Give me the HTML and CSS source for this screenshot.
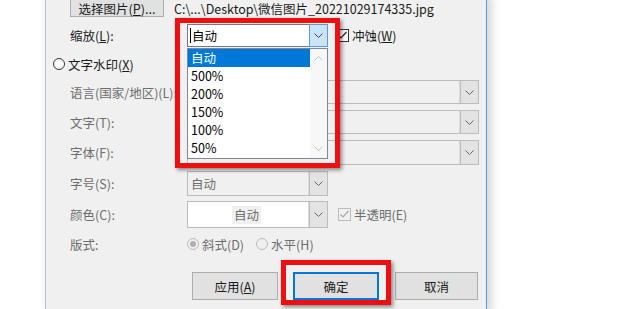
FILE: index.html
```html
<!DOCTYPE html>
<html lang="zh-CN">

<head>
    <meta charset="UTF-8">
    <meta name="viewport" content="width=device-width, initial-scale=1.0">
    <title>水印</title>
    <link rel="stylesheet" href="styles.css">
</head>

<body>
    <div class="screen">
        <div class="dialog">
            <!-- Picture source -->
            <div class="row row-top">
                <button class="btn btn-pick">选择图片(<u>P</u>)...</button>
                <span class="path">C:\...\Desktop\微信图片_20221029174335.jpg</span>
            </div>

            <!-- Scale -->
            <div class="row row-scale">
                <span class="label">缩放(<u>L</u>):</span>
                <div class="combo combo-active">
                    <span class="combo-text"><i class="caret"></i>自动</span>
                    <span class="combo-btn">
                        <svg width="9" height="5" viewBox="0 0 9 5"><path d="M0.5 0.5 L4.5 4.5 L8.5 0.5" fill="none" stroke="#444" stroke-width="1"/></svg>
                    </span>
                    <div class="droplist">
                        <ul class="options">
                            <li class="selected">自动</li>
                            <li>500%</li>
                            <li>200%</li>
                            <li>150%</li>
                            <li>100%</li>
                            <li>50%</li>
                        </ul>
                        <div class="scrollbar">
                            <svg width="9" height="5" viewBox="0 0 9 5"><path d="M0.5 4.5 L4.5 0.5 L8.5 4.5" fill="none" stroke="#c2c2c2" stroke-width="1"/></svg>
                            <svg width="9" height="5" viewBox="0 0 9 5"><path d="M0.5 0.5 L4.5 4.5 L8.5 0.5" fill="none" stroke="#c2c2c2" stroke-width="1"/></svg>
                        </div>
                    </div>
                </div>
                <span class="check">
                    <span class="box">
                        <svg width="11" height="11" viewBox="0 0 11 11"><path d="M1.5 5.5 L4 8 L9.5 2" fill="none" stroke="#222" stroke-width="1.2"/></svg>
                    </span>
                    冲蚀(<u>W</u>)
                </span>
            </div>

            <!-- Text watermark -->
            <div class="row row-radio">
                <span class="radio"></span>
                <span>文字水印(<u>X</u>)</span>
            </div>

            <div class="row row-lang">
                <span class="label off">语言(国家/地区)(L):</span>
                <div class="combo combo-off combo-wide">
                    <span class="combo-text"></span>
                    <span class="combo-btn"><svg width="9" height="5" viewBox="0 0 9 5"><path d="M0.5 0.5 L4.5 4.5 L8.5 0.5" fill="none" stroke="#666" stroke-width="1"/></svg></span>
                </div>
            </div>

            <div class="row row-text">
                <span class="label off">文字(T):</span>
                <div class="combo combo-off combo-wide">
                    <span class="combo-text"></span>
                    <span class="combo-btn"><svg width="9" height="5" viewBox="0 0 9 5"><path d="M0.5 0.5 L4.5 4.5 L8.5 0.5" fill="none" stroke="#666" stroke-width="1"/></svg></span>
                </div>
            </div>

            <div class="row row-font">
                <span class="label off">字体(F):</span>
                <div class="combo combo-off combo-wide">
                    <span class="combo-text"></span>
                    <span class="combo-btn"><svg width="9" height="5" viewBox="0 0 9 5"><path d="M0.5 0.5 L4.5 4.5 L8.5 0.5" fill="none" stroke="#666" stroke-width="1"/></svg></span>
                </div>
            </div>

            <div class="row row-size">
                <span class="label off">字号(S):</span>
                <div class="combo combo-off">
                    <span class="combo-text">自动</span>
                    <span class="combo-btn"><svg width="9" height="5" viewBox="0 0 9 5"><path d="M0.5 0.5 L4.5 4.5 L8.5 0.5" fill="none" stroke="#666" stroke-width="1"/></svg></span>
                </div>
            </div>

            <div class="row row-color">
                <span class="label off">颜色(C):</span>
                <div class="combo combo-off combo-color">
                    <span class="combo-text"><span class="swatch">自动</span></span>
                    <span class="combo-btn"><svg width="9" height="5" viewBox="0 0 9 5"><path d="M0.5 0.5 L4.5 4.5 L8.5 0.5" fill="none" stroke="#666" stroke-width="1"/></svg></span>
                </div>
                <span class="check check-off">
                    <span class="box">
                        <svg width="11" height="11" viewBox="0 0 11 11"><path d="M1.5 5.5 L4 8 L9.5 2" fill="none" stroke="#a8a8a8" stroke-width="1.2"/></svg>
                    </span>
                    半透明(E)
                </span>
            </div>

            <div class="row row-layout">
                <span class="label off">版式:</span>
                <span class="opt off"><span class="radio radio-off checked"></span>斜式(D)</span>
                <span class="opt opt-second off"><span class="radio radio-off"></span>水平(H)</span>
            </div>

            <!-- Dialog buttons -->
            <div class="row row-buttons">
                <button class="btn btn-apply">应用(<u>A</u>)</button>
                <button class="btn btn-ok">确定</button>
                <button class="btn btn-cancel">取消</button>
            </div>

            <!-- Red annotation frames -->
            <div class="mark mark-scale"></div>
            <div class="mark mark-ok"></div>
        </div>
    </div>
</body>

</html>
```

FILE: styles.css
```css
/* General Reset */
* {
    margin: 0;
    padding: 0;
    box-sizing: border-box;
    font-family: "Noto Sans CJK SC", "Liberation Sans", sans-serif;
}

body {
    background-color: #fff;
    overflow: hidden;
    font-size: 12.5px;
    color: #1a1a1a;
}

u {
    text-decoration: underline;
    text-underline-offset: 1px;
}

.screen {
    display: flex;
    padding-left: 45px;
    height: 309px;
}

/* Dialog window */
.dialog {
    position: relative;
    width: 442px;
    height: 320px;
    margin-top: -6px;
    padding-left: 24px;
    background-color: #f0f0f0;
    border-left: 1px solid #a9c4e4;
    border-right: 1px solid #5a9ad8;
    box-shadow: 4px 0 10px rgba(0, 0, 0, 0.18);
}

.row {
    display: flex;
    align-items: center;
}

.label {
    width: 117px;
    flex-shrink: 0;
}

.off {
    color: #6d6d6d;
}

/* Buttons */
.btn {
    height: 100%;
    font-size: 12.5px;
    color: #1a1a1a;
    background-color: #e1e1e1;
    border: 1px solid #adadad;
}

.row-top {
    height: 23px;
}

.btn-pick {
    width: 94px;
    padding-top: 4px;
}

.path {
    margin-left: 10px;
    margin-top: 5px;
    line-height: 15px;
}

/* Rows */
.row-scale {
    margin-top: 7px;
    height: 23px;
}

.row-radio {
    margin-top: 7px;
    margin-left: -17px;
    height: 20px;
}

.row-lang {
    margin-top: 6px;
    height: 24px;
}

.row-text,
.row-font {
    margin-top: 6px;
    height: 24px;
}

.row-font {
    height: 25px;
}

.row-size {
    margin-top: 6px;
    height: 25px;
}

.row-color {
    margin-top: 5px;
    height: 27px;
}

.row-layout {
    margin-top: 6px;
    height: 20px;
}

.row-buttons {
    margin-top: 18px;
    height: 28px;
    padding-left: 122px;
}

/* Combo boxes */
.combo {
    position: relative;
    display: flex;
    width: 141px;
    height: 100%;
    border: 1px solid #bcbcbc;
    background-color: #f0f0f0;
}

.combo-wide {
    width: 292px;
}

.combo-text {
    flex: 1;
    display: flex;
    align-items: center;
    padding-left: 3px;
    color: #6d6d6d;
}

.combo-btn {
    width: 18px;
    display: flex;
    align-items: center;
    justify-content: center;
    background-color: #e3e3e3;
    border-left: 1px solid #bcbcbc;
}

.combo-off .combo-text {
    border-right: 1px solid #dcdcdc;
}

.combo-active {
    border-color: #7a7a7a;
    background-color: #fff;
}

.combo-active .combo-text {
    color: #000;
    padding-left: 2px;
}

.combo-active .combo-btn {
    background-color: #cce4f7;
    border: 1px solid #569de5;
    margin: -1px -1px -1px 0;
    width: 19px;
}

.caret {
    display: inline-block;
    width: 1px;
    height: 15px;
    background-color: #000;
    margin-right: 1px;
}

.combo-color {
    background-color: #fff;
}

.combo-color .combo-text {
    justify-content: center;
    padding-right: 6px;
}

.swatch {
    background-color: #f0f0f0;
    padding: 0 2px;
    line-height: 18px;
}

/* Open list of the scale combo */
.droplist {
    position: absolute;
    top: 23px;
    left: -1px;
    width: 141px;
    height: 111px;
    display: flex;
    background-color: #fff;
    border: 1px solid #828790;
    z-index: 2;
}

.options {
    flex: 1;
    list-style: none;
}

.options li {
    height: 18px;
    line-height: 18px;
    padding-left: 3px;
    color: #000;
}

.options li.selected {
    background-color: #0078d7;
    color: #fff;
}

.scrollbar {
    width: 17px;
    display: flex;
    flex-direction: column;
    justify-content: space-between;
    align-items: center;
    padding: 7px 0 7px;
    background-color: #f7f7f7;
}

/* Check boxes and radios */
.check {
    display: flex;
    align-items: center;
    margin-left: 8px;
}

.check-off {
    margin-left: 10px;
    color: #6d6d6d;
}

.box {
    width: 13px;
    height: 13px;
    margin-right: 3px;
    border: 1px solid #333;
    background-color: #fff;
    display: flex;
    align-items: center;
    justify-content: center;
}

.check-off .box {
    border-color: #bcbcbc;
    background-color: #f0f0f0;
}

.radio {
    width: 12px;
    height: 12px;
    margin-right: 3px;
    border: 1px solid #333;
    border-radius: 50%;
    background-color: #fff;
}

.radio-off {
    border-color: #bcbcbc;
    background-color: #f0f0f0;
    position: relative;
}

.radio-off.checked::after {
    content: "";
    position: absolute;
    left: 2px;
    top: 2px;
    width: 6px;
    height: 6px;
    border-radius: 50%;
    background-color: #b0b0b0;
}

.opt {
    display: flex;
    align-items: center;
}

.opt-second {
    margin-left: 12px;
}

/* Bottom buttons */
.btn-apply,
.btn-ok {
    width: 86px;
}

.btn-ok {
    margin-left: 15px;
    border: 2px solid #0078d7;
}

.btn-cancel {
    width: 83px;
    margin-left: 16px;
}

/* Red annotation frames */
.mark {
    position: absolute;
    border: 5px solid #ee1010;
    box-shadow: 2px 2px 4px rgba(0, 0, 0, 0.45);
    z-index: 3;
}

.mark-scale {
    left: 129px;
    top: 24px;
    width: 165px;
    height: 150px;
}

.mark-ok {
    left: 235px;
    top: 266px;
    width: 110px;
    height: 45px;
}
```
